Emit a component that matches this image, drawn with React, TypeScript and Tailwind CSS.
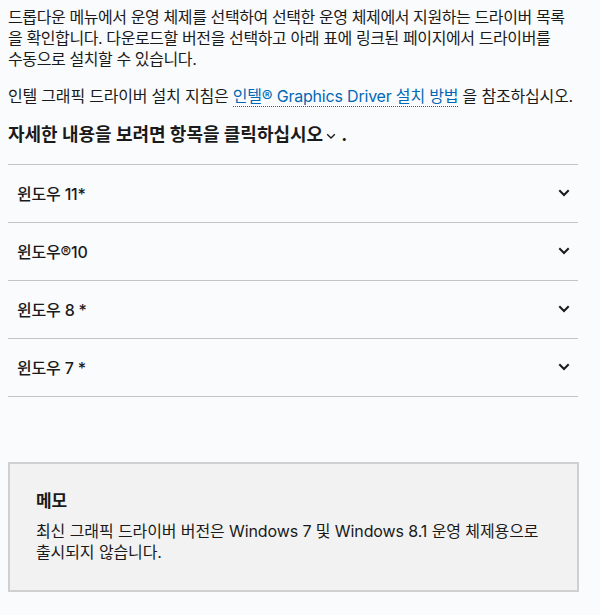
const font = { fontFamily: 'Inter, "Noto Sans CJK KR", sans-serif' };

function Chevron({ className = "", size = 12, stroke = 2 }: { className?: string; size?: number; stroke?: number }) {
  return (
    <svg className={className} width={size} height={size * 0.67} viewBox="0 0 12 8" fill="none" stroke="#1a1a1a" strokeWidth={stroke} strokeLinecap="square">
      <polyline points="2 2 6 6 10 2" />
    </svg>
  );
}

const items = ["윈도우 11*", "윈도우®10", "윈도우 8 *", "윈도우 7 *"];

export default function App() {
  return (
    <div className="min-h-screen bg-[#fafbfd] text-[#1a1a1a]" style={font}>
      <div className="w-[579px] pl-2 pt-[7px]">
        <p className="w-[560px] text-[16px] leading-[21px] tracking-[-0.4px]">
          드롭다운 메뉴에서 운영 체제를 선택하여 선택한 운영 체제에서 지원하는 드라이버 목록을 확인합니다. 다운로드할 버전을 선택하고 아래 표에 링크된 페이지에서 드라이버를 수동으로 설치할 수 있습니다.
        </p>
        <p className="mt-[16px] text-[16px] leading-[21px] tracking-[-0.2px] break-keep">
          인텔 그래픽 드라이버 설치 지침은{" "}
          <a className="text-[#0068b5] border-b border-dotted border-[#0068b5]">인텔® Graphics Driver 설치 방법</a>{" "}
          을 참조하십시오.
        </p>
        <h2 className="mt-[16px] flex items-end text-[18px] font-bold leading-[24px] tracking-[0px]">
          자세한 내용을 보려면 항목을 클릭하십시오
          <Chevron className="mb-[7px] ml-[3px]" size={10} stroke={1.6} />
          <span className="ml-[5px]">.</span>
        </h2>
        <div className="mt-[17px] mr-[1px] border-t border-[#c4c4c4]">
          {items.map((item) => (
            <div key={item} className="flex h-[58px] items-center justify-between border-b border-[#c4c4c4] pl-[9px] pr-[8px]">
              <span className="text-[16px] font-medium tracking-[-0.2px]">{item}</span>
              <Chevron />
            </div>
          ))}
        </div>
        <div className="mt-[65px] border-2 border-[#d0d0d0] bg-[#f2f2f2] px-[26px] pb-[27px] pt-[25px] break-keep">
          <h3 className="text-[17px] font-bold leading-[24px] tracking-[-0.2px]">메모</h3>
          <p className="mt-[8px] text-[16px] leading-[21px] tracking-[-0.1px]">
            최신 그래픽 드라이버 버전은 Windows 7 및 Windows 8.1 운영 체제용으로 출시되지 않습니다.
          </p>
        </div>
      </div>
    </div>
  );
}
